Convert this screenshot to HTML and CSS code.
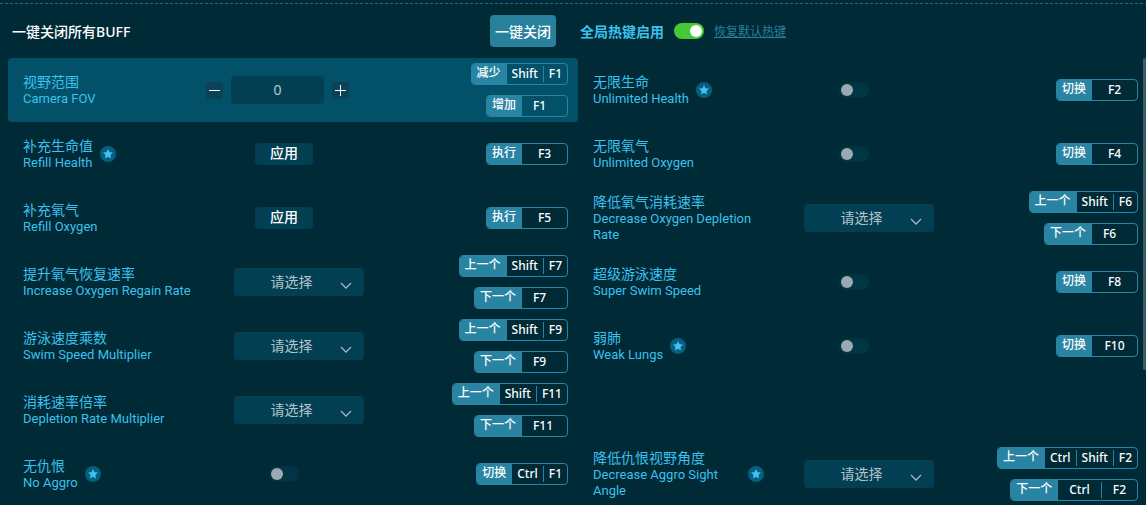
FILE: index.html
```html
<!DOCTYPE html>
<html lang="zh-CN">
<head>
<meta charset="utf-8">
<title>BUFF</title>
<link rel="stylesheet" href="styles.css">
</head>
<body>
<svg class="defs" aria-hidden="true">
  <symbol id="star" viewBox="0 0 16 16"><circle cx="8" cy="8" r="8" fill="#075f7f"/><path d="M8 3l1.500 3.200 3.500.4-2.600 2.300.7 3.500L8 10.700l-3.100 1.700.7-3.500L3 6.600l3.500-.4z" fill="#3cc4f2"/></symbol>
  <symbol id="chevron" viewBox="0 0 12 8"><path d="M1 1l5 5 5-5" fill="none" stroke="#a3b8c2" stroke-width="1.300"/></symbol>
</svg>
<main class="panel">
  <header class="top">
    <div class="top-left">
      <span class="title">一键关闭所有BUFF</span>
      <button class="close-all" type="button">一键关闭</button>
    </div>
    <div class="top-right">
      <label class="hotkey-label" for="global">全局热键启用</label>
      <input class="toggle" id="global" type="checkbox" checked>
      <a class="reset" href="#">恢复默认热键</a>
    </div>
  </header>
  <div class="list" id="list"></div>
  <div class="scroll-thumb"></div>
</main>
<script src="app.js"></script>
</body>
</html>
```
FILE: styles.css
```css
* { box-sizing: border-box; }
body {
  margin: 0;
  background: #002a36;
  color: #3cc1ec;
  font-family: "Noto Sans", "Noto Sans CJK SC", sans-serif;
  font-size: 13px;
  overflow: hidden;
}
button, input, select { font: inherit; margin: 0; }
.defs { position: absolute; width: 0; height: 0; }
.panel { position: relative; height: 100vh; padding: 3px 0 0 8px; overflow: hidden; }
.panel::before {
  content: "";
  position: absolute;
  top: 3px;
  left: 0;
  right: 0;
  height: 1px;
  background: repeating-linear-gradient(90deg, #1d6b85 0 3px, transparent 3px 5px);
}
.top, .list { display: grid; grid-template-columns: 1fr 1fr; margin-right: -2px; }
.top { height: 55px; font-size: 14px; }
.top-left { display: flex; align-items: center; justify-content: space-between; padding: 0 22px 0 4px; }
.title { color: #fff; font-weight: 500; }
.close-all {
  height: 32px;
  width: 66px;
  padding: 0;
  border: 0;
  border-radius: 4px;
  background: #27809c;
  color: #fff;
  font-weight: 500;
}
.top-right { display: flex; align-items: center; gap: 10px; padding-left: 2px; }
.hotkey-label { font-weight: 700; }
.reset { color: #27809c; font-size: 12px; text-decoration: underline; }

.list { grid-auto-rows: 64px; }
.cell {
  display: grid;
  grid-template-columns: 175px 172px 1fr;
  align-items: center;
  padding: 0 10px 0 15px;
  border-radius: 4px;
}
.cell.active { background: #035168; }
.name { display: flex; align-items: center; gap: 7px; }
.name.starred { padding-right: 4px; }
.name-zh { display: block; font-size: 14px; line-height: 18px; }
.name-en { display: block; font-family: Roboto, sans-serif; font-size: 13px; line-height: 16px; }
.star { flex: none; width: 16px; height: 16px; }
.control { display: flex; justify-content: center; }

.toggle {
  appearance: none;
  display: flex;
  align-items: center;
  width: 30px;
  height: 16px;
  padding: 0 2px;
  border-radius: 8px;
  background: #013545;
}
.toggle::before { content: ""; width: 12px; height: 12px; border-radius: 50%; background: #9aaab1; }
.toggle:checked { background: #45c937; justify-content: flex-end; }
.toggle:checked::before { background: #fff; }

.apply {
  width: 58px;
  height: 22px;
  padding: 0 0 2px;
  border: 0;
  border-radius: 4px;
  background: #033f53;
  color: #fff;
  font-size: 14px;
  line-height: 20px;
  font-weight: 500;
}
.stepper { display: flex; align-items: center; gap: 8px; margin-right: 13px; }
.step {
  display: grid;
  place-items: center;
  width: 17px;
  height: 17px;
  padding: 0;
  border: 0;
  border-radius: 3px;
  background: #0a4357;
}
.amount {
  width: 93px;
  height: 28px;
  padding: 0 0 2px;
  border: 0;
  border-radius: 4px;
  background: #033f53;
  color: #b9c8cf;
  font-size: 14px;
  text-align: center;
}
.picker { position: relative; margin-left: 30px; }
.picker-select {
  appearance: none;
  display: block;
  width: 130px;
  height: 28px;
  padding: 0 15px 2px 0;
  border: 0;
  border-radius: 4px;
  background: #033f53;
  color: #b3c3cb;
  font-size: 14px;
  text-align: center;
}
.picker-arrow { position: absolute; right: 12px; top: 14px; width: 12px; height: 8px; pointer-events: none; }

.keys { display: flex; flex-direction: column; align-items: flex-end; gap: 10px; }
.hotkey {
  display: flex;
  height: 22px;
  border: 1px solid #2884a2;
  border-radius: 4px;
  overflow: hidden;
  background: transparent;
  color: #fff;
  padding: 0;
}
.action { padding: 0 6px 0 5px; background: #2884a2; font-size: 12px; line-height: 18px; font-weight: 500; }
.combo { display: flex; align-items: center; min-width: 45px; }
.combo.single { justify-content: center; }
.key { padding: 0 5px; font-size: 12px; line-height: 20px; font-weight: 500; }
.key + .key { position: relative; margin-left: 1px; }
.key + .key::before {
  content: "";
  position: absolute;
  left: -1px;
  top: 2px;
  bottom: 2px;
  width: 1px;
  background: #2884a2;
}
.wide .key { padding: 0 11px; }

.scroll-thumb {
  position: absolute;
  top: 58px;
  right: 0;
  width: 3px;
  height: 312px;
  border-radius: 2px;
  background: #3d5c66;
}
```
FILE: app.js
```js
const UP = '上一个', DOWN = '下一个', SWITCH = '切换', RUN = '执行';
const items = [
  { zh: '视野范围', en: 'Camera FOV', type: 'stepper', active: true, keys: [['减少', 'Shift', 'F1'], ['增加', 'F1']] },
  { zh: '无限生命', en: 'Unlimited Health', star: true, type: 'toggle', keys: [[SWITCH, 'F2']] },
  { zh: '补充生命值', en: 'Refill Health', star: true, type: 'apply', keys: [[RUN, 'F3']] },
  { zh: '无限氧气', en: 'Unlimited Oxygen', type: 'toggle', keys: [[SWITCH, 'F4']] },
  { zh: '补充氧气', en: 'Refill Oxygen', type: 'apply', keys: [[RUN, 'F5']] },
  { zh: '降低氧气消耗速率', en: 'Decrease Oxygen Depletion Rate', type: 'select', keys: [[UP, 'Shift', 'F6'], [DOWN, 'F6']] },
  { zh: '提升氧气恢复速率', en: 'Increase Oxygen Regain Rate', type: 'select', keys: [[UP, 'Shift', 'F7'], [DOWN, 'F7']] },
  { zh: '超级游泳速度', en: 'Super Swim Speed', type: 'toggle', keys: [[SWITCH, 'F8']] },
  { zh: '游泳速度乘数', en: 'Swim Speed Multiplier', type: 'select', keys: [[UP, 'Shift', 'F9'], [DOWN, 'F9']] },
  { zh: '弱肺', en: 'Weak Lungs', star: true, type: 'toggle', keys: [[SWITCH, 'F10']] },
  { zh: '消耗速率倍率', en: 'Depletion Rate Multiplier', type: 'select', keys: [[UP, 'Shift', 'F11'], [DOWN, 'F11']] },
  null,
  { zh: '无仇恨', en: 'No Aggro', star: true, type: 'toggle', keys: [[SWITCH, 'Ctrl', 'F1']] },
  { zh: '降低仇恨视野角度', en: 'Decrease Aggro Sight Angle', star: true, type: 'select', keys: [[UP, 'Ctrl', 'Shift', 'F2'], [DOWN, 'Ctrl', 'F2']] }
];

const controls = {
  toggle: id => `<input class="toggle" id="${id}" type="checkbox">`,
  apply: id => `<button class="apply" id="${id}" type="button">应用</button>`,
  select: id => `<div class="picker"><select class="picker-select" id="${id}"><option>请选择</option></select><svg class="picker-arrow"><use href="#chevron"/></svg></div>`,
  stepper: id => `<div class="stepper">
    <button class="step" type="button" aria-label="减少"><svg width="11" height="11"><path d="M0 5.5h11" stroke="#fff"/></svg></button>
    <input class="amount" id="${id}" type="text" value="0">
    <button class="step" type="button" aria-label="增加"><svg width="11" height="11"><path d="M0 5.5h11M5.500 0v11" stroke="#fff"/></svg></button>
  </div>`
};

function hotkey([action, ...keys], index) {
  const mode = index ? 'wide' : keys.length === 1 ? 'single' : '';
  return `<button class="hotkey" type="button"><span class="action">${action}</span><span class="combo ${mode}">${keys.map(k => `<span class="key">${k}</span>`).join('')}</span></button>`;
}

document.getElementById('list').innerHTML = items.map((item, i) => {
  if (!item) return '<div class="cell"></div>';
  const id = `item-${i}`;
  return `<div class="cell${item.active ? ' active' : ''}">
    <div class="name${item.star ? ' starred' : ''}">
      <label for="${id}"><span class="name-zh">${item.zh}</span><span class="name-en">${item.en}</span></label>
      ${item.star ? '<svg class="star"><use href="#star"/></svg>' : ''}
    </div>
    <div class="control">${controls[item.type](id)}</div>
    <div class="keys">${item.keys.map(hotkey).join('')}</div>
  </div>`;
}).join('');
```
